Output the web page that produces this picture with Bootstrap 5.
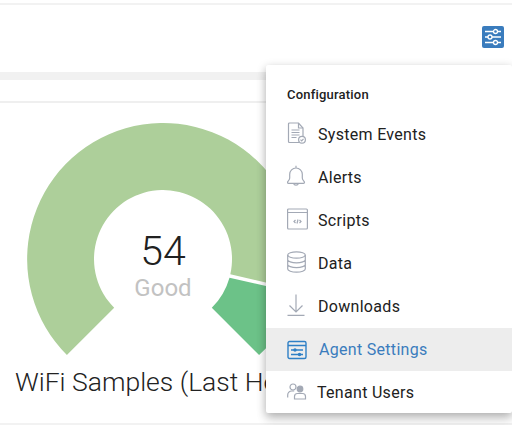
<!DOCTYPE html>
<html lang="en">
<head>
<meta charset="utf-8">
<link href="https://cdn.jsdelivr.net/npm/bootstrap@5.3.0/dist/css/bootstrap.min.css" rel="stylesheet">
<style>
html,body{width:512px;height:425px;overflow:hidden;background:#fff;font-family:Roboto,"Liberation Sans",sans-serif;color:#212121}
.stage{position:relative;width:512px;height:425px;overflow:hidden}
.top-rule{height:2px;margin-top:3px;background:#f2f2f2}
.head-bar{height:67px;padding:21px 8px 0 0}
.tool-btn{width:22px;height:22px;border-radius:2px;background:#3a7cbd}
.band{height:8px;background:#f1f1f1}
.sub-bar{height:21px}
.thin-rule{height:2px;background:#efefef}
.gauge-card{height:322px;border-bottom:2px solid #f2f2f2}
.gauge-svg{display:block}
.g-value{font-size:41px;font-weight:300;fill:#212121;font-family:Roboto,sans-serif}
.g-label{font-size:24px;fill:#c2c2c2;font-family:Roboto,sans-serif}
.g-title{font-size:26.500px;font-weight:300;fill:#222;font-family:Roboto,sans-serif}
.cfg-menu{position:absolute;left:266px;top:65px;width:246px;height:348px;border-radius:2px;box-shadow:0 3px 10px rgba(0,0,0,.28),0 8px 12px rgba(0,0,0,.08)}
.cfg-title{font-size:13px;font-weight:500;letter-spacing:.2px;height:48px;padding:21px 0 0 21px;line-height:17px;color:#212121}
.cfg-item{height:43px;padding-left:21px;font-size:16px;letter-spacing:.3px;color:#212121;border:0;gap:10px}
.cfg-item svg{flex:none}
.cfg-item.is-on{background:#ededed;color:#3a7cbd;gap:11px}
.cfg-item.is-tight{gap:9px}
.ico{fill:none;stroke:#a3a9b5;stroke-width:1.2;margin-bottom:4px}
.cfg-item.is-tight .ico{margin-bottom:2px}
.ico-on{fill:none;stroke:#2f80c6;stroke-width:1.4}
</style>
</head>
<body>
<div class="stage">
<div class="top-rule"></div>
<div class="head-bar d-flex justify-content-end">
<div class="tool-btn d-flex align-items-center justify-content-center">
<svg width="20" height="20" viewBox="0 0 20 20" fill="none" stroke="#fff" stroke-width="1.300"><path d="M2 4.500h16M2 10h16M2 15.500h16"/><circle cx="12.500" cy="4.500" r="2" fill="#3a7cbd"/><circle cx="7" cy="10" r="2" fill="#3a7cbd"/><circle cx="12.500" cy="15.500" r="2" fill="#3a7cbd"/></svg>
</div>
</div>
<div class="band"></div>
<div class="sub-bar"></div>
<div class="thin-rule"></div>
<div class="gauge-card">
<svg class="gauge-svg" width="512" height="320" viewBox="0 103 512 320">
<path d="M66.900 355.100A136 136 0 1 1 295.700 289.400L230.300 274.300A69 69 0 1 0 114.200 307.800Z" fill="#adcf9a"/>
<path d="M296.500 292.900A136 136 0 0 1 259.100 355.100L211.800 307.800A69 69 0 0 0 229.500 277.700Z" fill="#6cc288"/>
<text class="g-value" x="163" y="265" text-anchor="middle">54</text>
<text class="g-label" x="163" y="296" text-anchor="middle">Good</text>
<text class="g-title" x="15" y="391">WiFi Samples (Last Hour)</text>
</svg>
</div>
<div class="cfg-menu bg-white">
<div class="cfg-title">Configuration</div>
<div class="list-group list-group-flush">
<div class="cfg-item d-flex align-items-center">
<svg class="ico" width="21" height="22" viewBox="0 0 21 22"><path d="M12 20.500H2.500a1 1 0 0 1-1-1V2a1 1 0 0 1 1-1h9l4.500 5v8"/><path d="M11.500 1v5H16M4.500 8h8M4.500 10.500h8M4.500 13h8M4.500 15.500h5"/><circle cx="15" cy="17.700" r="3.400"/><path d="M13.500 17.700l1.200 1.200 1.800-2"/></svg>
<span>System Events</span>
</div>
<div class="cfg-item d-flex align-items-center">
<svg class="ico" width="21" height="22" viewBox="0 0 21 22"><path d="M9 3a6.300 6.300 0 0 0-6.300 6.300v3.700c0 2.300-2.200 3-2.200 4.300 0 .6.400 1 1 1h15c.6 0 1-.4 1-1 0-1.300-2.200-2-2.200-4.300V9.300A6.300 6.300 0 0 0 9 3zM9 .7V3M6.500 18.300a2.600 2.600 0 0 0 5 0"/></svg>
<span>Alerts</span>
</div>
<div class="cfg-item d-flex align-items-center">
<svg class="ico" width="21" height="22" viewBox="0 0 21 22"><rect x=".6" y="1" width="19.800" height="20" rx="1"/><path d="M.6 4.500h19.800M8.500 12l-1.500 1.500 1.500 1.500M12.500 12l1.500 1.500-1.500 1.500M11 11.500l-1 4"/></svg>
<span>Scripts</span>
</div>
<div class="cfg-item d-flex align-items-center">
<svg class="ico" width="21" height="22" viewBox="0 0 21 22"><ellipse cx="9.500" cy="4" rx="8.800" ry="3.200"/><path d="M.7 4v14c0 1.700 3.900 3.200 8.800 3.200s8.800-1.500 8.800-3.200V4M.7 8.700c0 1.700 3.900 3.200 8.800 3.200s8.800-1.500 8.800-3.200M.7 13.400c0 1.700 3.900 3.200 8.800 3.200s8.800-1.500 8.800-3.200"/></svg>
<span>Data</span>
</div>
<div class="cfg-item d-flex align-items-center">
<svg class="ico" width="21" height="22" viewBox="0 0 21 22"><path d="M9 .5v17M2.500 11.500L9 18l6.500-6.500M.5 21.300h17"/></svg>
<span>Downloads</span>
</div>
<div class="cfg-item is-on d-flex align-items-center">
<svg class="ico-on" width="21" height="20" viewBox="0 0 21 20"><rect x="1" y="1.500" width="18" height="17" rx="1.500"/><path d="M1 5.500h18M4 10h12M4 14.500h12"/><circle cx="8" cy="10" r="1" fill="#2f80c6"/><circle cx="12.500" cy="14.500" r="1" fill="#2f80c6"/></svg>
<span>Agent Settings</span>
</div>
<div class="cfg-item is-tight d-flex align-items-center">
<svg class="ico" width="21" height="17" viewBox="0 0 21 17"><circle cx="6" cy="4" r="3"/><path d="M.7 14.500v-2.500a4 4 0 0 1 4-4h2.500"/><circle cx="13" cy="6" r="2.800" fill="#a3a9b5"/><path d="M7.500 16v-2.500a3 3 0 0 1 3-3h5a3 3 0 0 1 3 3V16z"/></svg>
<span>Tenant Users</span>
</div>
</div>
</div>
</div>
<script src="https://cdn.jsdelivr.net/npm/bootstrap@5.3.0/dist/js/bootstrap.bundle.min.js"></script>
</body>
</html>
